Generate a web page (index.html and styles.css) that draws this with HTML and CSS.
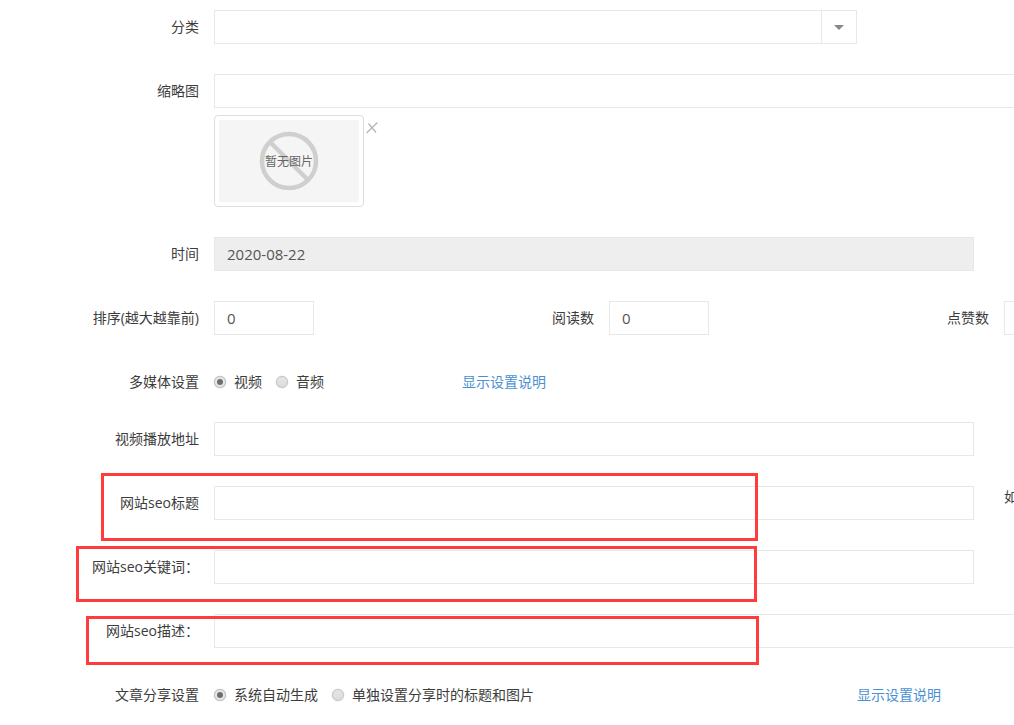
FILE: index.html
```html
<!DOCTYPE html>
<html lang="zh-CN">
<head>
<meta charset="utf-8">
<title>文章设置</title>
<link rel="stylesheet" href="styles.css">
</head>
<body>
<main class="page">
  <form class="form">
    <div class="row">
      <label class="label">分类</label>
      <div class="select">
        <div class="select-value"></div>
        <div class="select-arrow"><span class="caret"></span></div>
      </div>
    </div>

    <div class="row">
      <label class="label">缩略图</label>
      <div class="thumb-col">
        <input class="field field-xl" type="text">
        <div class="thumb-line">
          <div class="thumb">
            <div class="thumb-inner">
              <svg class="thumb-icon" width="60" height="60" viewBox="0 0 60 60" aria-hidden="true">
                <circle cx="30" cy="30" r="27" fill="none" stroke="#cfcfcf" stroke-width="4.5"/>
                <line x1="11" y1="11" x2="49" y2="49" stroke="#cfcfcf" stroke-width="4.5"/>
              </svg>
              <span class="thumb-text">暂无图片</span>
            </div>
          </div>
          <svg class="thumb-close" width="14" height="13" viewBox="0 0 14 13" aria-hidden="true">
            <path d="M1.5 12 L12.5 1.5 M3.5 2.5 L11 11.5" fill="none" stroke="#b5b5b5" stroke-width="1.2"/>
          </svg>
        </div>
      </div>
    </div>

    <div class="row">
      <label class="label">时间</label>
      <input class="field field-lg field-disabled" type="text" value="2020-08-22" readonly>
    </div>

    <div class="row">
      <div class="group">
        <label class="label">排序(越大越靠前)</label>
        <input class="field field-sm" type="text" value="0">
      </div>
      <div class="group">
        <label class="label">阅读数</label>
        <input class="field field-sm" type="text" value="0">
      </div>
      <div class="group">
        <label class="label">点赞数</label>
        <input class="field field-sm" type="text" value="0">
      </div>
    </div>

    <div class="row row-radio">
      <span class="label label-radio">多媒体设置</span>
      <div class="radios radios-short">
        <span class="radio"><i class="dot dot-on"></i>视频</span>
        <span class="radio"><i class="dot"></i>音频</span>
      </div>
      <a class="link">显示设置说明</a>
    </div>

    <div class="row">
      <label class="label">视频播放地址</label>
      <input class="field field-lg" type="text">
    </div>

    <div class="row">
      <label class="label">网站seo标题</label>
      <input class="field field-lg" type="text">
      <span class="help">如果不填写</span>
    </div>

    <div class="row">
      <label class="label">网站seo关键词：</label>
      <input class="field field-lg" type="text">
    </div>

    <div class="row">
      <label class="label">网站seo描述：</label>
      <input class="field field-xl" type="text">
    </div>

    <div class="row row-radio">
      <span class="label label-radio">文章分享设置</span>
      <div class="radios radios-long">
        <span class="radio"><i class="dot dot-on"></i>系统自动生成</span>
        <span class="radio"><i class="dot"></i>单独设置分享时的标题和图片</span>
      </div>
      <a class="link">显示设置说明</a>
    </div>
  </form>

  <div class="mark mark-title"></div>
  <div class="mark mark-keywords"></div>
  <div class="mark mark-desc"></div>
</main>
</body>
</html>
```

FILE: styles.css
```css
* {
  box-sizing: border-box;
}

html,
body {
  margin: 0;
  padding: 0;
  background: #fff;
}

.page {
  position: relative;
  width: 1014px;
  height: 725px;
  overflow: hidden;
  font-family: "Open Sans", "Noto Sans CJK SC", sans-serif;
  font-size: 14px;
  color: #3c3c3c;
}

.form {
  padding-top: 10px;
  width: 1300px;
}

.row {
  display: flex;
  margin-bottom: 30px;
}

.row-radio {
  padding-top: 7px;
  line-height: 20px;
}

.label {
  flex: none;
  width: 199px;
  margin-right: 15px;
  text-align: right;
  line-height: 34px;
  white-space: nowrap;
}

.label-radio {
  line-height: 20px;
}

.field {
  flex: none;
  display: block;
  height: 34px;
  margin: 0;
  padding: 0 12px;
  border: 1px solid #e8e8e8;
  border-radius: 0;
  background: #fff;
  font-family: "Open Sans", sans-serif;
  font-size: 15px;
  color: #555;
  outline: none;
}

.field-sm {
  width: 100px;
}

.field-lg {
  width: 760px;
}

.field-xl {
  width: 1000px;
}

.field-disabled {
  background: #eee;
}

.select {
  display: flex;
  width: 643px;
  height: 34px;
  border: 1px solid #e8e8e8;
}

.select-value {
  flex: 1;
}

.select-arrow {
  display: flex;
  align-items: center;
  justify-content: center;
  width: 35px;
  border-left: 1px solid #e8e8e8;
}

.caret {
  width: 0;
  height: 0;
  border-top: 5px solid #888;
  border-left: 5px solid transparent;
  border-right: 5px solid transparent;
}

.thumb-line {
  display: flex;
  align-items: flex-start;
  margin-top: 7px;
}

.thumb {
  width: 150px;
  height: 92px;
  padding: 4px;
  border: 1px solid #ddd;
  border-radius: 4px;
}

.thumb-inner {
  position: relative;
  display: flex;
  align-items: center;
  justify-content: center;
  height: 82px;
  background: #f5f5f5;
}

.thumb-icon {
  display: block;
}

.thumb-text {
  position: absolute;
  top: 50%;
  left: 0;
  right: 0;
  transform: translateY(-50%);
  margin-top: 1px;
  text-align: center;
  font-size: 12px;
  line-height: 16px;
  color: #666;
}

.thumb-close {
  flex: none;
  margin: 6px 0 0 1px;
}

.group {
  display: flex;
  flex: none;
  width: 395px;
}

.radios {
  flex: none;
  display: flex;
  gap: 14px;
}

.radios-short {
  width: 181px;
}

.radios-long {
  width: 576px;
}

.radio {
  display: flex;
  align-items: center;
  white-space: nowrap;
}

.dot {
  flex: none;
  display: flex;
  align-items: center;
  justify-content: center;
  width: 12px;
  height: 12px;
  margin-right: 8px;
  border: 1px solid #c4c4c4;
  border-radius: 50%;
  background: linear-gradient(#e6e6e6, #dcdcdc);
  box-shadow: 0 0 1px #aaa;
}

.dot-on {
  background: #e8e8e8;
}

.dot-on::after {
  content: "";
  width: 6px;
  height: 6px;
  border-radius: 50%;
  background: #6e6e6e;
}

.link {
  flex: none;
  margin-left: 67px;
  color: #4a90d2;
  white-space: nowrap;
}

.help {
  flex: none;
  margin: 1px 0 0 30px;
  line-height: 20px;
  white-space: nowrap;
}

.mark {
  position: absolute;
  border: 3px solid #ff3b3b;
}

.mark-title {
  left: 101px;
  top: 473px;
  width: 657px;
  height: 68px;
}

.mark-keywords {
  left: 76px;
  top: 546px;
  width: 681px;
  height: 56px;
}

.mark-desc {
  left: 86px;
  top: 616px;
  width: 673px;
  height: 49px;
}
```
